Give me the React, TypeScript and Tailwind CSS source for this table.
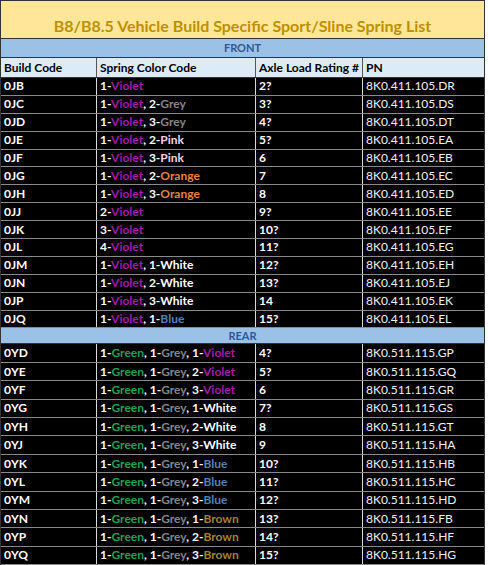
import React from 'react';

const C: Record<string, string> = {
  Violet: 'text-[#a01ca6] font-bold',
  Grey: 'text-[#858585] font-bold',
  Pink: 'text-[#f2d2f0] font-bold',
  Orange: 'text-[#e8843a] font-bold',
  White: 'text-white font-bold',
  Blue: 'text-[#4f81bd] font-bold',
  Green: 'text-[#1fa052] font-bold',
  Brown: 'text-[#a3822d] font-bold',
};

type Row = { code: string; springs: [number, string][]; load: string; pn: string };

const front: Row[] = [
  { code: '0JB', springs: [[1, 'Violet']], load: '2?', pn: '8K0.411.105.DR' },
  { code: '0JC', springs: [[1, 'Violet'], [2, 'Grey']], load: '3?', pn: '8K0.411.105.DS' },
  { code: '0JD', springs: [[1, 'Violet'], [3, 'Grey']], load: '4?', pn: '8K0.411.105.DT' },
  { code: '0JE', springs: [[1, 'Violet'], [2, 'Pink']], load: '5?', pn: '8K0.411.105.EA' },
  { code: '0JF', springs: [[1, 'Violet'], [3, 'Pink']], load: '6', pn: '8K0.411.105.EB' },
  { code: '0JG', springs: [[1, 'Violet'], [2, 'Orange']], load: '7', pn: '8K0.411.105.EC' },
  { code: '0JH', springs: [[1, 'Violet'], [3, 'Orange']], load: '8', pn: '8K0.411.105.ED' },
  { code: '0JJ', springs: [[2, 'Violet']], load: '9?', pn: '8K0.411.105.EE' },
  { code: '0JK', springs: [[3, 'Violet']], load: '10?', pn: '8K0.411.105.EF' },
  { code: '0JL', springs: [[4, 'Violet']], load: '11?', pn: '8K0.411.105.EG' },
  { code: '0JM', springs: [[1, 'Violet'], [1, 'White']], load: '12?', pn: '8K0.411.105.EH' },
  { code: '0JN', springs: [[1, 'Violet'], [2, 'White']], load: '13?', pn: '8K0.411.105.EJ' },
  { code: '0JP', springs: [[1, 'Violet'], [3, 'White']], load: '14', pn: '8K0.411.105.EK' },
  { code: '0JQ', springs: [[1, 'Violet'], [1, 'Blue']], load: '15?', pn: '8K0.411.105.EL' },
];

const rear: Row[] = [
  { code: '0YD', springs: [[1, 'Green'], [1, 'Grey'], [1, 'Violet']], load: '4?', pn: '8K0.511.115.GP' },
  { code: '0YE', springs: [[1, 'Green'], [1, 'Grey'], [2, 'Violet']], load: '5?', pn: '8K0.511.115.GQ' },
  { code: '0YF', springs: [[1, 'Green'], [1, 'Grey'], [3, 'Violet']], load: '6', pn: '8K0.511.115.GR' },
  { code: '0YG', springs: [[1, 'Green'], [1, 'Grey'], [1, 'White']], load: '7?', pn: '8K0.511.115.GS' },
  { code: '0YH', springs: [[1, 'Green'], [1, 'Grey'], [2, 'White']], load: '8', pn: '8K0.511.115.GT' },
  { code: '0YJ', springs: [[1, 'Green'], [1, 'Grey'], [3, 'White']], load: '9', pn: '8K0.511.115.HA' },
  { code: '0YK', springs: [[1, 'Green'], [1, 'Grey'], [1, 'Blue']], load: '10?', pn: '8K0.511.115.HB' },
  { code: '0YL', springs: [[1, 'Green'], [1, 'Grey'], [2, 'Blue']], load: '11?', pn: '8K0.511.115.HC' },
  { code: '0YM', springs: [[1, 'Green'], [1, 'Grey'], [3, 'Blue']], load: '12?', pn: '8K0.511.115.HD' },
  { code: '0YN', springs: [[1, 'Green'], [1, 'Grey'], [1, 'Brown']], load: '13?', pn: '8K0.511.115.FB' },
  { code: '0YP', springs: [[1, 'Green'], [1, 'Grey'], [2, 'Brown']], load: '14?', pn: '8K0.511.115.HF' },
  { code: '0YQ', springs: [[1, 'Green'], [1, 'Grey'], [3, 'Brown']], load: '15?', pn: '8K0.511.115.HG' },
];

const COLS = 'grid grid-cols-[96px_159px_107px_121px]';

function DataRow({ r, h }: { r: Row; h: string }) {
  return (
    <div className={`${COLS} ${h} bg-black border-b border-[#8a8a8a] text-[12px] leading-none`}>
      <div className="flex items-center pl-[3px] text-white font-bold border-r border-[#d9d9d9]">{r.code}</div>
      <div className="flex items-center pl-[3px] whitespace-pre border-r border-[#d9d9d9]">
        <span>
          {r.springs.map(([n, c], i) => (
            <React.Fragment key={i}>
              <span className="text-white font-bold">{n}-</span>
              <span className={C[c]}>{c}</span>
              {i < r.springs.length - 1 && <span className="text-white font-bold">{', '}</span>}
            </React.Fragment>
          ))}
        </span>
      </div>
      <div className="flex items-center pl-[3px] text-white font-bold border-r border-[#d9d9d9]">{r.load}</div>
      <div className="flex items-center pl-[3px] text-[#f2f2f2]">{r.pn}</div>
    </div>
  );
}

export default function App() {
  return (
    <div className="w-[488px] h-[565px] bg-white overflow-hidden" style={{ fontFamily: 'Lato, "Open Sans", sans-serif' }}>
      <div className="w-[485px] border border-[#333] border-b-0">
        {/* Title */}
        <div className="h-[38px] bg-[#ffe699] border-b border-[#333] flex items-end justify-center pb-[4px]">
          <span className="text-[16px] leading-none font-bold text-[#bf8f00]">
            B8/B8.5 Vehicle Build Specific Sport/Sline Spring List
          </span>
        </div>
        {/* FRONT */}
        <div className="h-[19px] bg-[#9bc2e6] border-b border-[#333] flex items-center justify-center text-[11px] font-bold text-[#2f5597]">
          FRONT
        </div>
        {/* Header */}
        <div className={`${COLS} h-[20px] bg-[#ddebf7] border-b border-[#333] text-[12px] font-bold text-black`}>
          <div className="flex items-center pl-[3px] border-r border-[#555]">Build Code</div>
          <div className="flex items-center pl-[3px] border-r border-[#555]">Spring Color Code</div>
          <div className="flex items-center pl-[3px] border-r border-[#555]">Axle Load Rating #</div>
          <div className="flex items-center pl-[3px]">PN</div>
        </div>
        {front.map(r => (
          <DataRow key={r.code} r={r} h="h-[17.9px]" />
        ))}
        {/* REAR */}
        <div className="h-[16px] bg-[#9bc2e6] border-b border-[#333] flex items-center justify-center text-[11px] font-bold text-[#2f5597]">
          REAR
        </div>
        {rear.map(r => (
          <DataRow key={r.code} r={r} h="h-[18.4px]" />
        ))}
      </div>
    </div>
  );
}
